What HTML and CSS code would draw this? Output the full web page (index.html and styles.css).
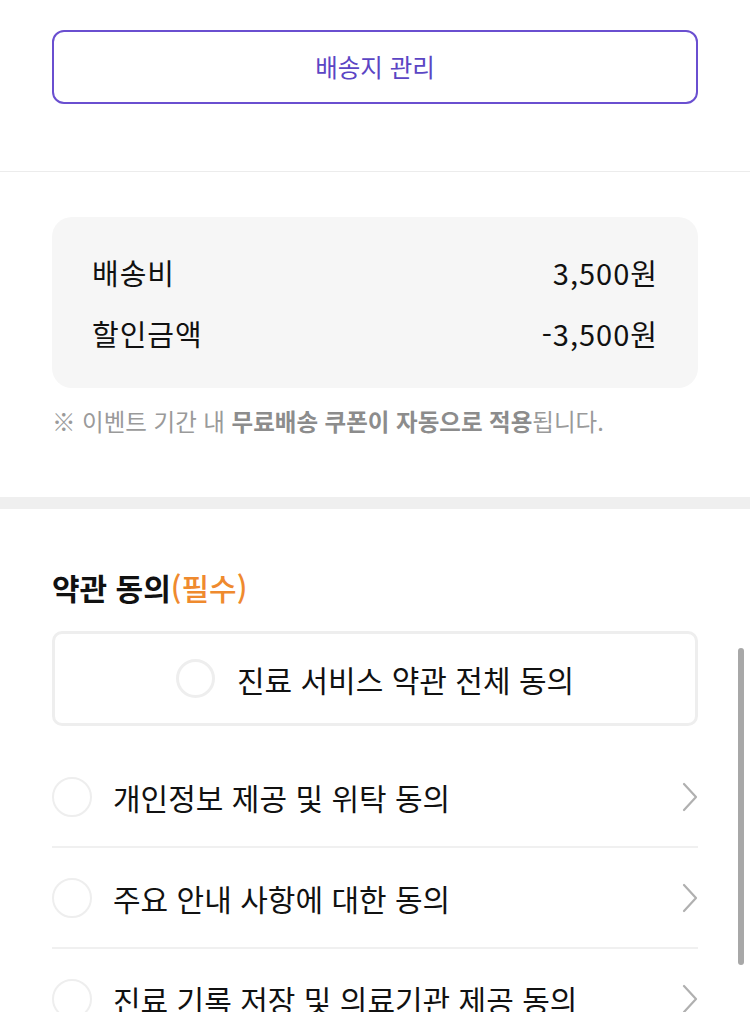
FILE: index.html
```html
<!DOCTYPE html>
<html lang="ko">
<head>
<meta charset="utf-8">
<link rel="stylesheet" href="styles.css">
</head>
<body>
<div class="page">
  <section class="sec-address">
    <button class="btn-outline">배송지 관리</button>
  </section>

  <section class="sec-fee">
    <div class="fee-card">
      <div class="fee-row"><span>배송비</span><span>3,500원</span></div>
      <div class="fee-row"><span>할인금액</span><span>-3,500원</span></div>
    </div>
    <p class="note">※ 이벤트 기간 내 <b>무료배송 쿠폰이 자동으로 적용</b>됩니다.</p>
  </section>

  <div class="thick-divider"></div>

  <section class="sec-terms">
    <h2 class="terms-title">약관 동의<span class="req">(필수)</span></h2>
    <div class="all-agree">
      <span class="radio"></span>
      <span class="all-text">진료 서비스 약관 전체 동의</span>
    </div>
    <ul class="term-list">
      <li class="term-row">
        <span class="radio"></span>
        <span class="term-text">개인정보 제공 및 위탁 동의</span>
        <svg class="chev" viewBox="0 0 16 30" width="16" height="30"><path d="M2 2 L14 15 L2 28" fill="none" stroke="#b0b0b0" stroke-width="2.2" stroke-linecap="round" stroke-linejoin="round"/></svg>
      </li>
      <li class="term-row">
        <span class="radio"></span>
        <span class="term-text">주요 안내 사항에 대한 동의</span>
        <svg class="chev" viewBox="0 0 16 30" width="16" height="30"><path d="M2 2 L14 15 L2 28" fill="none" stroke="#b0b0b0" stroke-width="2.2" stroke-linecap="round" stroke-linejoin="round"/></svg>
      </li>
      <li class="term-row">
        <span class="radio"></span>
        <span class="term-text">진료 기록 저장 및 의료기관 제공 동의</span>
        <svg class="chev" viewBox="0 0 16 30" width="16" height="30"><path d="M2 2 L14 15 L2 28" fill="none" stroke="#b0b0b0" stroke-width="2.2" stroke-linecap="round" stroke-linejoin="round"/></svg>
      </li>
    </ul>
  </section>
</div>
<div class="scrollbar"></div>
</body>
</html>
```

FILE: styles.css
```css
html, body {
  margin: 0;
  padding: 0;
  background: #fff;
}
body {
  font-family: "Noto Sans CJK KR", "Noto Sans", sans-serif;
  color: #111;
  width: 750px;
  height: 1012px;
  overflow: hidden;
  position: relative;
}
.page {
  display: flex;
  flex-direction: column;
}
.sec-address {
  padding: 30px 52px 67px 52px;
  border-bottom: 1px solid #ececec;
}
.btn-outline {
  display: block;
  width: 100%;
  height: 74px;
  box-sizing: border-box;
  border: 2px solid #6a4fd0;
  border-radius: 12px;
  background: #fff;
  color: #5b45c4;
  font-family: inherit;
  font-size: 24.5px;
  line-height: 30px;
  padding: 0;
}
.sec-fee {
  padding: 45px 52px 61px 52px;
}
.fee-card {
  background: #f6f6f6;
  border-radius: 20px;
  padding: 35px 41px 35px 40px;
  display: flex;
  flex-direction: column;
  gap: 21px;
}
.fee-row {
  display: flex;
  justify-content: space-between;
  font-size: 29px;
  line-height: 40px;
  letter-spacing: 1px;
  color: #111;
}
.fee-row span:last-child {
  margin-right: -1px;
}
.note {
  margin: 18px 0 0 0;
  font-size: 23.5px;
  line-height: 30px;
  color: #9a9a9a;
}
.note b {
  font-weight: 700;
  color: #8c8c8c;
}
.thick-divider {
  height: 12px;
  background: #efefef;
}
.sec-terms {
  padding: 60px 52px 0 52px;
}
.terms-title {
  margin: 0;
  font-size: 30px;
  line-height: 36px;
  font-weight: 700;
  color: #111;
  letter-spacing: 0;
}
.req {
  color: #ef8a2e;
  font-weight: 500;
}
.all-agree {
  margin-top: 26px;
  height: 95px;
  box-sizing: border-box;
  border: 3px solid #eeeeee;
  border-radius: 10px;
  display: flex;
  align-items: center;
  justify-content: center;
  gap: 22px;
}
.radio {
  flex: none;
  width: 40px;
  height: 40px;
  box-sizing: border-box;
  border: 3px solid #eeeeee;
  border-radius: 50%;
  background: #fff;
}
.all-agree .radio {
  width: 39px;
  height: 39px;
}
.all-text {
  font-size: 30px;
  line-height: 40px;
}
.term-list {
  list-style: none;
  margin: 21px 0 0 0;
  padding: 0;
}
.term-row {
  display: flex;
  align-items: center;
  height: 99px;
  border-bottom: 2px solid #f0f0f0;
}
.term-row .radio {
  border-width: 2px;
}
.term-text {
  flex: 1;
  margin-left: 21px;
  font-size: 30px;
  line-height: 40px;
}
.chev {
  flex: none;
}
.scrollbar {
  position: absolute;
  left: 738px;
  top: 648px;
  width: 6px;
  height: 317px;
  border-radius: 3px;
  background: #a8a8a8;
}
```
